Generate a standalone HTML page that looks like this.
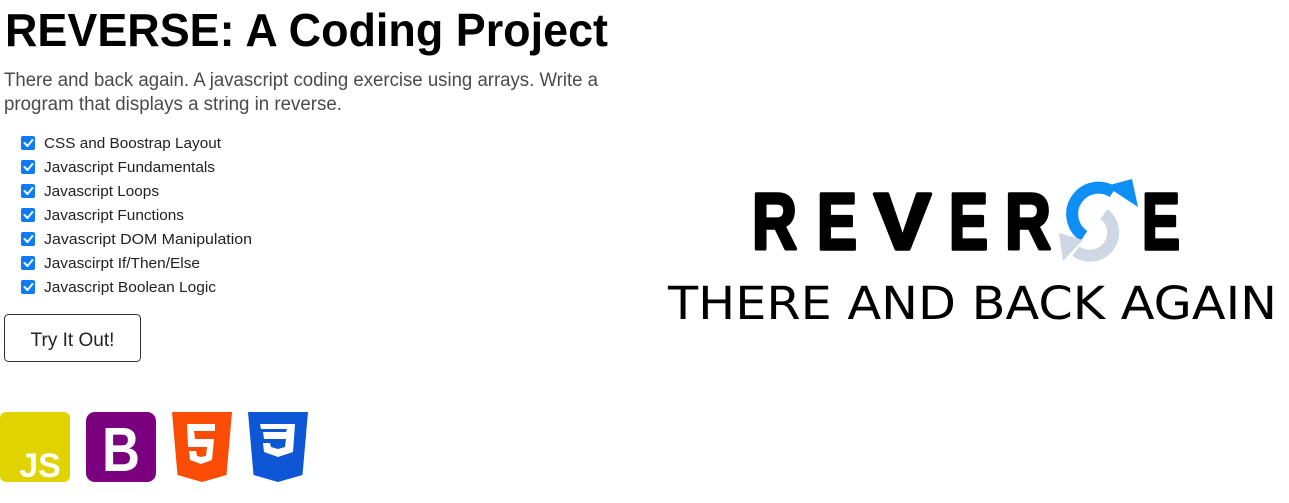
<!DOCTYPE html>
<html><head><meta charset="utf-8"><style>
html,body{margin:0;padding:0;background:#fff;width:1289px;height:503px;overflow:hidden}
</style></head><body>
<svg width="1289" height="503" viewBox="0 0 1289 503" xmlns="http://www.w3.org/2000/svg" style="display:block">
<text x="5" y="46" font-family="Liberation Sans, sans-serif" font-weight="bold" font-size="46" textLength="603" lengthAdjust="spacingAndGlyphs" fill="#000">REVERSE: A Coding Project</text>
<g font-family="Liberation Sans, sans-serif" font-size="19" fill="#4a4a4a">
<text x="4" y="86" textLength="594" lengthAdjust="spacingAndGlyphs">There and back again. A javascript coding exercise using arrays. Write a</text>
<text x="4" y="110" textLength="338" lengthAdjust="spacingAndGlyphs">program that displays a string in reverse.</text>
</g>
<g font-family="Liberation Sans, sans-serif" font-size="14.5" fill="#222">
<text x="44" y="148" textLength="177" lengthAdjust="spacingAndGlyphs">CSS and Boostrap Layout</text>
<text x="44" y="172" textLength="171" lengthAdjust="spacingAndGlyphs">Javascript Fundamentals</text>
<text x="44" y="196" textLength="115" lengthAdjust="spacingAndGlyphs">Javascript Loops</text>
<text x="44" y="220" textLength="140" lengthAdjust="spacingAndGlyphs">Javascript Functions</text>
<text x="44" y="244" textLength="208" lengthAdjust="spacingAndGlyphs">Javascript DOM Manipulation</text>
<text x="44" y="268" textLength="156" lengthAdjust="spacingAndGlyphs">Javascirpt If/Then/Else</text>
<text x="44" y="292" textLength="172" lengthAdjust="spacingAndGlyphs">Javascript Boolean Logic</text>
</g>
<g fill="#0d7bf2">
<rect x="21" y="136" width="14" height="14" rx="2"/><rect x="21" y="160" width="14" height="14" rx="2"/><rect x="21" y="184" width="14" height="14" rx="2"/><rect x="21" y="208" width="14" height="14" rx="2"/><rect x="21" y="232" width="14" height="14" rx="2"/><rect x="21" y="256" width="14" height="14" rx="2"/><rect x="21" y="280" width="14" height="14" rx="2"/>
</g>
<g stroke="#fff" stroke-width="2" fill="none" stroke-linecap="round" stroke-linejoin="round">
<path d="M24.5 143l3 3 5-6"/><path d="M24.5 167l3 3 5-6"/><path d="M24.5 191l3 3 5-6"/><path d="M24.5 215l3 3 5-6"/><path d="M24.5 239l3 3 5-6"/><path d="M24.5 263l3 3 5-6"/><path d="M24.5 287l3 3 5-6"/>
</g>
<rect x="4.5" y="314.5" width="136" height="47" rx="4" fill="#fff" stroke="#333"/>
<text x="72.5" y="346" text-anchor="middle" font-family="Liberation Sans, sans-serif" font-size="19" fill="#222">Try It Out!</text>
<!-- icons -->
<rect x="0" y="412" width="70" height="70" rx="6" fill="#e0d300"/>
<text x="40" y="477" text-anchor="middle" font-family="Liberation Sans, sans-serif" font-weight="bold" font-size="34" fill="#fff">JS</text>
<rect x="86" y="412" width="70" height="70" rx="9" fill="#7b007f"/>
<text x="121" y="471" text-anchor="middle" font-family="Liberation Sans, sans-serif" font-weight="bold" font-size="62" textLength="38" lengthAdjust="spacingAndGlyphs" fill="#fff">B</text>
<path d="M172 412h60l-5.5 63-24.5 7-24.5-7z" fill="#fa4c05"/>
<path d="M187 424h28v7h-21l1 8h19l-2 21-11 4-11-4-1-9h7l1 5 4 1 5-1 1-9h-19z" fill="#fff"/>
<path d="M248 412h60l-5.5 63-24.5 7-24.5-7z" fill="#0d56d6"/>
<path d="M260 424h35l-2 28-15 5-14-5-1-9h7l1 4 7 2 7-2 1-8h-22l-1-7h23l1-3h-26z" fill="#fff"/>
<!-- logo -->
<g font-family="Liberation Sans, sans-serif" font-weight="bold" font-size="80" fill="#000" stroke="#000" stroke-width="3.5" stroke-linejoin="round">
<text x="752" y="249" textLength="45" lengthAdjust="spacingAndGlyphs">R</text>
<text x="817" y="249" textLength="40" lengthAdjust="spacingAndGlyphs">E</text>
<text x="874" y="249" textLength="57" lengthAdjust="spacingAndGlyphs">V</text>
<text x="949" y="249" textLength="39" lengthAdjust="spacingAndGlyphs">E</text>
<text x="1005" y="249" textLength="46" lengthAdjust="spacingAndGlyphs">R</text>
<text x="1142" y="249" textLength="38" lengthAdjust="spacingAndGlyphs">E</text>
</g>
<path d="M1084 236A20 20 0 0 1 1113 192" fill="none" stroke="#0d8ff5" stroke-width="12"/>
<path d="M1106 186l26-7 6 28z" fill="#0d8ff5"/>
<path d="M1104 214A20 20 0 0 1 1076 251" fill="none" stroke="#cdd8e4" stroke-width="12"/>
<path d="M1083 240l-24-7 4 28z" fill="#cdd8e4"/>
<text x="668" y="319" textLength="609" lengthAdjust="spacingAndGlyphs" font-family="DejaVu Sans, sans-serif" font-size="45" fill="#000">THERE AND BACK AGAIN</text>
</svg>
</body></html>
